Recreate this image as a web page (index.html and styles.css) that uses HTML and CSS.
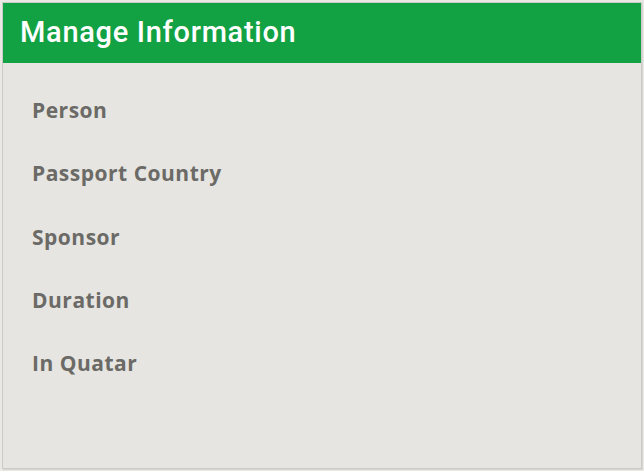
FILE: index.html
```html
<!DOCTYPE html>
<html>
<head>
<meta charset="utf-8">
<link rel="stylesheet" href="styles.css">
</head>
<body>
<div class="card">
  <div class="header"><h1 class="title">Manage Information</h1></div>
  <ul class="list">
    <li class="item">Person</li>
    <li class="item">Passport Country</li>
    <li class="item">Sponsor</li>
    <li class="item">Duration</li>
    <li class="item">In Quatar</li>
  </ul>
</div>
</body>
</html>
```
FILE: styles.css
```css
html, body {
  margin: 0;
  padding: 0;
  background: #e9e8e4;
  width: 644px;
  height: 471px;
  overflow: hidden;
}
.card {
  box-sizing: border-box;
  margin: 2px 0 0 2px;
  width: 640px;
  height: 467px;
  border: 1px solid #cbcac6;
  box-shadow: 1px 1px 0 #d8d7d3;
  background: #e6e5e1;
  font-family: "Open Sans", "Liberation Sans", sans-serif;
}
.header {
  background: #12a244;
  height: 60px;
  display: flex;
  align-items: center;
  padding-left: 17px;
}
.title {
  margin: 0;
  color: #fff;
  font-family: Roboto, "Open Sans", sans-serif;
  font-size: 29px;
  font-weight: 500;
  letter-spacing: 0.7px;
  line-height: 34px;
  padding-bottom: 2px;
}
.list {
  list-style: none;
  margin: 0;
  padding: 35px 0 0 29px;
  display: flex;
  flex-direction: column;
  gap: 39.25px;
}
.item {
  color: #6b6a66;
  font-size: 21px;
  font-weight: 700;
  line-height: 24px;
  letter-spacing: 0.5px;
}
```
